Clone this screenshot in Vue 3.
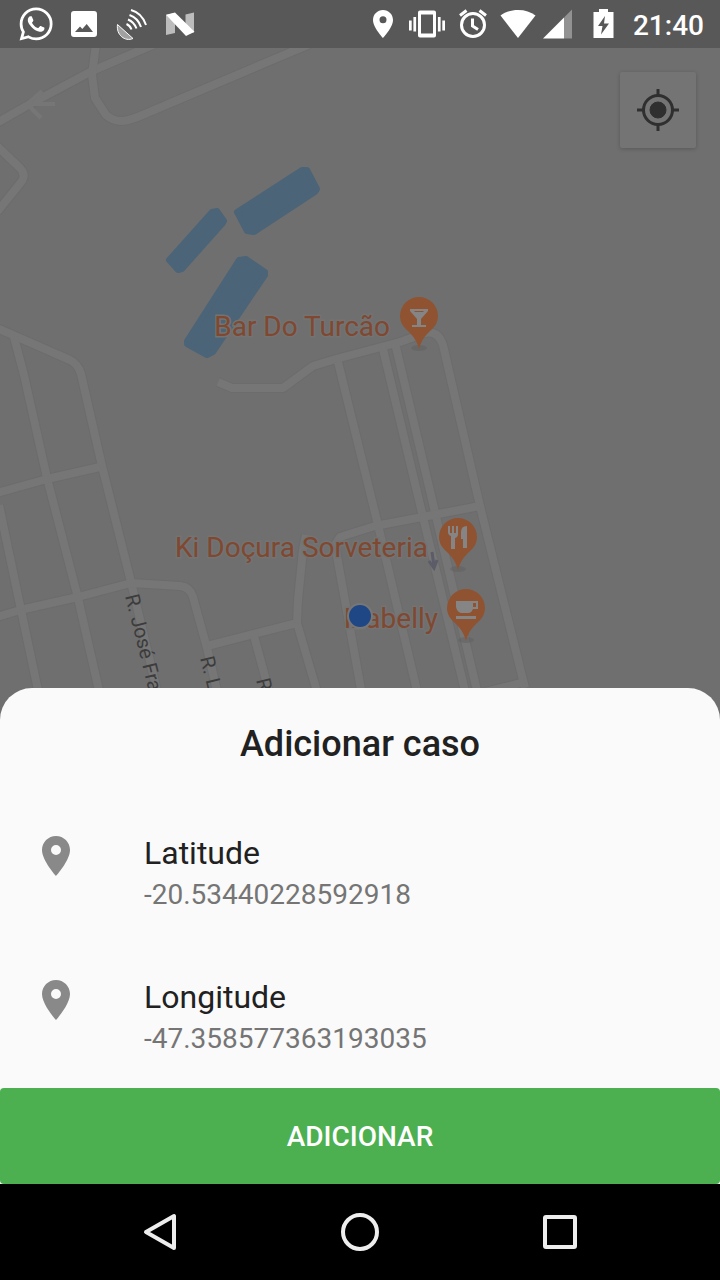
<script setup>
const roads = [
  'M-5 124L30 104L92 71L155 44',
  'M96 44L92 75L95 98L106 115Q113 121 121 121Q128 121 140 116L310 44',
  'M-3 146L20 168Q26 174 22 181L-3 212',
  'M-3 328L70 360Q78 364 81 374L102 466L131 582L158 695',
  'M14 337L24 375L47 478L78 598L100 695',
  'M-3 493L47 479L100 467',
  'M-3 617L20 610L78 597L131 583L180 586Q190 587 193 597L207 648L218 695',
  'M-1 505L20 605L39 695',
  'M207 646L297 623L318 695',
  'M254 636L270 695',
  'M297 623L298 600L303 550L306 535',
  'M218 382L232 388H283L313 366L336 359L400 342L425 333Q438 330 443 345L480 506L525 688',
  'M338 362L378 525L418 695',
  'M382 345L423 517L466 695',
  'M395 343L435 512L478 695',
  'M362 695L335 545L340 537L375 526L480 506',
  'M485 692L525 682',
]

const places = [
  { name: 'Bar Do Turcão', x: 419, y: 316, kind: 'bar' },
  { name: 'Ki Doçura Sorveteria', x: 458, y: 537, kind: 'food' },
  { name: 'Izabelly', x: 466, y: 608, kind: 'cafe' },
]

const labelGap = { bar: 29, food: 30, cafe: 28 }

const coordinates = [
  { label: 'Latitude', value: '-20.53440228592918' },
  { label: 'Longitude', value: '-47.358577363193035' },
]
</script>

<template>
  <div class="screen">
    <header class="status">
      <div class="icons left">
        <svg viewBox="0 0 48 48" aria-hidden="true">
          <g transform="translate(7.5 7.5) scale(1.38)">
            <path d="M17.472 14.382c-.297-.149-1.758-.867-2.03-.967-.273-.099-.471-.148-.67.15-.197.297-.767.966-.94 1.164-.173.199-.347.223-.644.075-.297-.15-1.255-.463-2.39-1.475-.883-.788-1.48-1.761-1.653-2.059-.173-.297-.018-.458.13-.606.134-.133.298-.347.446-.52.149-.174.198-.298.298-.497.099-.198.05-.371-.025-.52-.075-.149-.669-1.612-.916-2.207-.242-.579-.487-.5-.669-.51-.173-.008-.371-.01-.57-.01-.198 0-.52.074-.792.372-.272.297-1.04 1.016-1.04 2.479 0 1.462 1.065 2.875 1.213 3.074.149.198 2.096 3.2 5.077 4.487.709.306 1.262.489 1.694.625.712.227 1.36.195 1.871.118.571-.085 1.758-.719 2.006-1.413.248-.694.248-1.289.173-1.413-.074-.124-.272-.198-.57-.347m-5.421 7.403h-.004a9.87 9.87 0 01-5.031-1.378l-.361-.214-3.741.982.998-3.648-.235-.374a9.86 9.86 0 01-1.51-5.26c.001-5.45 4.436-9.884 9.888-9.884 2.64 0 5.122 1.03 6.988 2.898a9.825 9.825 0 012.893 6.994c-.003 5.45-4.437 9.884-9.885 9.884m8.413-18.297A11.815 11.815 0 0012.05 0C5.495 0 .16 5.335.157 11.892c0 2.096.547 4.142 1.588 5.945L.057 24l6.305-1.654a11.882 11.882 0 005.683 1.448h.005c6.554 0 11.89-5.335 11.893-11.893a11.821 11.821 0 00-3.48-8.413z" />
          </g>
        </svg>
        <svg viewBox="0 0 48 48" aria-hidden="true">
          <path fill-rule="evenodd" d="M14 11h20a3 3 0 0 1 3 3v20a3 3 0 0 1-3 3H14a3 3 0 0 1-3-3V14a3 3 0 0 1 3-3zM15 32h18l-6.300-8-4.400 5-2.300-2.500z" />
        </svg>
        <svg viewBox="0 0 48 48" aria-hidden="true">
          <path class="dish" d="M9.500 24.500L25 38.500C17 42 8 35 9.500 24.500z" />
          <g class="waves">
            <path d="M23 10Q34 13 38 25" />
            <path d="M21.500 15Q30 18 33 27" />
            <path d="M20 19.500Q26 22 28.500 28.500" />
            <path d="M18.500 24Q22 25.500 23.500 29.500" />
          </g>
        </svg>
        <svg viewBox="0 0 48 48" aria-hidden="true">
          <path opacity=".6" d="M10 15l9-2v20l-9 2zM29.500 14.500l8.500-2v20l-8.500 2z" />
          <path d="M10 14.700L19 12.500L38.500 31.700L30 36z" />
        </svg>
      </div>
      <div class="icons right">
        <svg viewBox="0 0 44 48" aria-hidden="true">
          <path fill-rule="evenodd" d="M22 10c-5.600 0-10 4.400-10 10 0 7.500 10 18 10 18s10-10.500 10-18c0-5.600-4.400-10-10-10zm0 6.300a3.500 3.500 0 1 1 0 7 3.500 3.500 0 0 1 0-7z" />
        </svg>
        <svg viewBox="0 0 44 48" aria-hidden="true">
          <path fill-rule="evenodd" d="M15 10.500h14a2 2 0 0 1 2 2v23a2 2 0 0 1-2 2H15a2 2 0 0 1-2-2v-23a2 2 0 0 1 2-2zm1 4v19h12v-19zM4 20.500h2.700v10H4zM8.400 17h2.700v14.500H8.400zM32.900 17h2.700v14.500h-2.700zM37.300 20.500H40v10h-2.700z" />
        </svg>
        <svg viewBox="0 0 44 48" aria-hidden="true">
          <g class="line">
            <circle cx="24" cy="25" r="11.500" />
            <path d="M11 15.500l6.500-5M37 15.500l-6.500-5M23.500 18.500v7.500l5.500 3.500" />
          </g>
        </svg>
        <svg viewBox="0 0 44 48" aria-hidden="true">
          <path d="M25 38L7.500 15.500C12 12 18 10 25 10s13 2 17.500 5.500z" />
        </svg>
        <svg viewBox="0 0 44 48" aria-hidden="true">
          <path opacity=".35" d="M27 17.500l8-8V38.500h-8z" />
          <path d="M6 38.500l21-21v21z" />
        </svg>
        <svg viewBox="0 0 44 48" aria-hidden="true">
          <path fill-rule="evenodd" d="M18 9h9v3h5.500v26h-20V12H18zM24 16l-7 10h4.500l-1.500 8.500 8-11h-5z" />
        </svg>
        <time>21:40</time>
      </div>
    </header>

    <main class="stage">
      <svg class="map" viewBox="0 48 720 680" preserveAspectRatio="xMidYMin slice" role="img" aria-label="Mapa">
        <g class="road edge"><path v-for="d in roads" :key="d" :d="d" /></g>
        <g class="road"><path v-for="d in roads" :key="d" :d="d" /></g>
        <path class="road arrow" d="M42 91L27 104H55M27 104L41 118" />
        <g class="water">
          <path d="M237 212L302 170L307 170L317 189L315 192L254 232L247 231z" />
          <path d="M169 260L212 212L217 211L224 221L223 223L182 269L178 270z" />
          <path d="M187 341L239 260L246 259L265 272L265 275L213 352L207 355L187 344z" />
        </g>
        <path class="one-way" d="M432 552l2 14M429 561l5 7 3-8" />
        <g class="street">
          <text transform="translate(125 596) rotate(76)">R. José Fra</text>
          <text transform="translate(200 658) rotate(76)">R. L</text>
          <text transform="translate(256 680) rotate(76)">R</text>
        </g>
        <g v-for="p in places" :key="p.name">
          <text class="place" :x="p.x - labelGap[p.kind]" :y="p.y + 20">{{ p.name }}</text>
          <g :transform="`translate(${p.x} ${p.y})`">
            <ellipse class="shadow" cx="0" cy="32" rx="8" ry="3" />
            <path class="pin" d="M0 33C-2 26-4 22-10 16C-16 11-19 6-19 0A19 19 0 0 1 19 0C19 6 16 11 10 16C4 22 2 26 0 33z" />
            <path v-if="p.kind === 'bar'" class="glyph" fill-rule="evenodd" d="M-9-7H9V-5L2 3V9H7V11H-7V9H-2V3L-9-5zM-5-5L-4-4H4L5-5z" />
            <path v-else-if="p.kind === 'food'" class="glyph" d="M-10-11h2v7h2v-7h2v7h2v-7h2v8q0 3-3 4v11h-4V-1q-3-1-3-4zM9-11V11H5V2H3V-5q0-6 6-6z" />
            <path v-else class="glyph" fill-rule="evenodd" d="M-10-7H12V1H7Q6 4 3 5H-5Q-9 4-10-1zM7-5V-1H10V-5zM-10 8H10V11H-10z" />
          </g>
        </g>
        <circle class="halo" cx="360" cy="616" r="13" />
        <circle class="here" cx="360" cy="616" r="11" />
      </svg>

      <button class="locate" type="button" aria-label="Minha localização">
        <svg viewBox="0 0 44 44" aria-hidden="true">
          <circle cx="22" cy="22" r="8" />
          <path d="M22 1v6M22 37v6M1 22h6M37 22h6" />
          <circle class="ring" cx="22" cy="22" r="14.500" />
        </svg>
      </button>

      <section class="sheet" aria-labelledby="sheet-title">
        <h1 id="sheet-title">Adicionar caso</h1>
        <dl>
          <div v-for="c in coordinates" :key="c.label" class="row">
            <svg viewBox="0 0 24 24" aria-hidden="true">
              <path d="M12 2C8.130 2 5 5.130 5 9c0 5.250 7 13 7 13s7-7.750 7-13c0-3.870-3.130-7-7-7zm0 9.500a2.500 2.500 0 0 1 0-5 2.500 2.500 0 0 1 0 5z" />
            </svg>
            <dt>{{ c.label }}</dt>
            <dd>{{ c.value }}</dd>
          </div>
        </dl>
        <button class="add" type="button">ADICIONAR</button>
      </section>
    </main>

    <nav class="system" aria-label="Sistema">
      <button type="button" aria-label="Voltar">
        <svg viewBox="0 0 48 48" aria-hidden="true"><path d="M38 8v32L10 24z" /></svg>
      </button>
      <button type="button" aria-label="Início">
        <svg viewBox="0 0 48 48" aria-hidden="true"><circle cx="24" cy="24" r="17" /></svg>
      </button>
      <button type="button" aria-label="Recentes">
        <svg viewBox="0 0 48 48" aria-hidden="true"><rect x="9" y="9" width="30" height="30" rx="1" /></svg>
      </button>
    </nav>
  </div>
</template>

<style>
body {
  margin: 0;
  background: #000;
}
</style>

<style scoped>
.screen {
  display: flex;
  flex-direction: column;
  min-height: 100vh;
  font-family: Roboto, "Liberation Sans", sans-serif;
  color: #212121;
}
button {
  border: 0;
  padding: 0;
  font: inherit;
  cursor: pointer;
}
.status {
  display: flex;
  justify-content: space-between;
  height: 48px;
  padding: 0 16px 0 12px;
  background: #585858;
  color: #fff;
}
.icons {
  display: flex;
  align-items: flex-start;
}
.icons svg {
  height: 48px;
  fill: #fff;
}
.left svg {
  width: 48px;
}
.right svg {
  width: 44px;
}
.icons .line,
.icons .waves {
  fill: none;
  stroke: #fff;
  stroke-width: 3;
}
.icons .waves {
  stroke-width: 2;
}
.icons .dish {
  fill: #a0a0a0;
  stroke: #fff;
}
time {
  margin-left: 8px;
  font-size: 28px;
  font-weight: 500;
  line-height: 51px;
}
.stage {
  position: relative;
  display: flex;
  flex: 1;
  flex-direction: column;
  background: #6f6f6f;
}
.map {
  position: absolute;
  top: 0;
  left: 0;
  width: 100%;
}
.road {
  fill: none;
  stroke: #767676;
  stroke-width: 8;
  stroke-linejoin: round;
}
.road.edge {
  stroke: #6c6c6c;
  stroke-width: 10;
}
.road.arrow {
  stroke-width: 4;
}
.water {
  fill: #4c6478;
  stroke: #4c6478;
  stroke-width: 6;
  stroke-linejoin: round;
}
.one-way {
  fill: none;
  stroke: #5c5c68;
  stroke-width: 3;
}
.street {
  font-size: 20px;
  fill: #3c3c3c;
}
.place {
  font-size: 28px;
  text-anchor: end;
  fill: #804830;
  stroke: #737373;
  stroke-width: 3;
  paint-order: stroke;
}
.shadow {
  fill: #5c5c5c;
  opacity: .4;
}
.pin {
  fill: #905331;
}
.glyph {
  fill: #858585;
}
.halo {
  fill: #777;
}
.here {
  fill: #1f4786;
}
.locate {
  position: relative;
  display: grid;
  place-items: center;
  align-self: flex-end;
  width: 76px;
  height: 76px;
  margin: 24px 24px 48px;
  border-radius: 2px;
  background: #747474;
  box-shadow: 0 1px 4px rgba(0, 0, 0, .2);
}
.locate svg {
  width: 44px;
  height: 44px;
  fill: #2f2f2f;
  stroke: #2f2f2f;
}
.locate path,
.locate .ring {
  fill: none;
  stroke-width: 3;
}
.sheet {
  position: relative;
  margin-top: auto;
  border-radius: 32px 32px 0 0;
  background: #fafafa;
}
h1 {
  margin: 0;
  font-size: 36px;
  font-weight: 500;
  line-height: 112px;
  text-align: center;
}
dl {
  margin: 0;
}
.row {
  display: grid;
  grid-template-columns: 48px 1fr;
  column-gap: 64px;
  padding: 32px 32px 28px;
}
.row svg {
  grid-row: 1 / 3;
  width: 48px;
  height: 48px;
  fill: #898989;
}
dt,
dd {
  margin: 0;
  font-size: 32px;
  line-height: 42px;
}
dd {
  font-size: 28px;
  color: #757575;
}
.add {
  display: block;
  width: 100%;
  height: 96px;
  border-radius: 4px;
  background: #4caf50;
  color: #fff;
  font-size: 28px;
  font-weight: 500;
}
.system {
  display: grid;
  grid-template-columns: repeat(3, 1fr);
  height: 96px;
  padding: 0 60px;
  background: #000;
}
.system button {
  display: grid;
  place-items: center;
  background: none;
}
.system svg {
  width: 48px;
  height: 48px;
  fill: none;
  stroke: #eee;
  stroke-width: 4;
  stroke-linejoin: round;
}
</style>
